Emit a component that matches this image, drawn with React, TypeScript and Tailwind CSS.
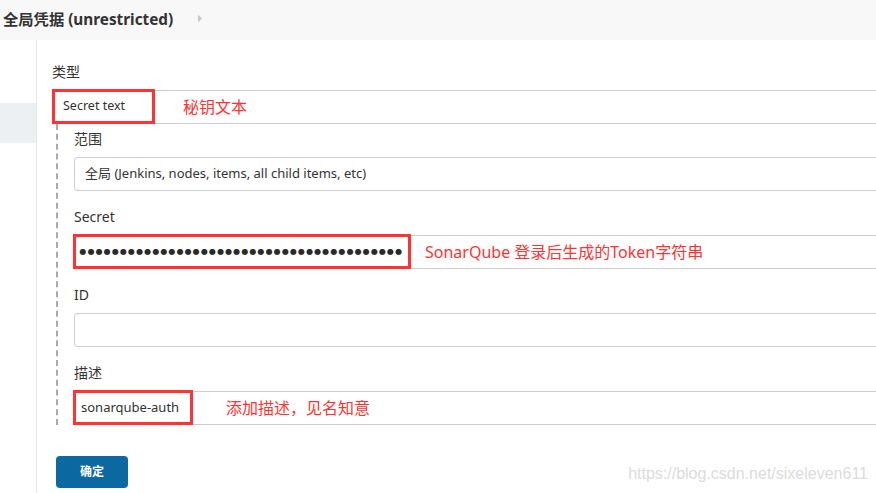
import React from "react";

const font = { fontFamily: '"Noto Sans", "Noto Sans CJK SC", sans-serif' };

export default function App() {
  const dots = Array.from({ length: 40 });

  return (
    <div className="w-[876px] h-[493px] overflow-hidden bg-white text-[#333] flex flex-col relative" style={font}>
      {/* 顶部标题 */}
      <header className="h-10 shrink-0 bg-[#f8f8f8] flex items-center pl-[3px]">
        <h1 className="text-[15.3px] font-bold text-[#333] leading-none">全局凭据 (unrestricted)</h1>
        <svg width="6" height="9" viewBox="0 0 6 9" className="ml-[24px] -mt-[3px]">
          <path d="M1 0.5 L5 4.5 L1 8.5 Z" fill="#c8c8c8" />
        </svg>
      </header>

      <div className="flex flex-1">
        {/* 侧栏 */}
        <aside className="w-[37px] shrink-0 border-r border-[#e6e6e6] pt-[63px]">
          <div className="h-10 bg-[#edf0f3]" />
        </aside>

        {/* 表单 */}
        <main className="flex-1 pl-[15px] pt-[24px] -mr-4">
          <label className="block text-[14px] leading-[16px] mb-[10px]">类型</label>
          <div className="flex items-center h-[34px] border-y border-[#ccc]">
            <div className="h-[35px] -mt-[2px] -mb-px border-[3px] border-[#f33] flex items-center w-[103px] pl-[8px] text-[12.5px]">
              Secret text
            </div>
            <span className="ml-[28px] text-[16px] text-[#f33]">秘钥文本</span>
          </div>

          <div className="ml-[4px] border-l-2 border-dashed border-[#aaa] pl-[16px] pt-[7px]">
            <label className="block text-[14px] leading-[16px] mb-[10px]">范围</label>
            <div className="flex items-center h-[34px] border border-[#ccc] rounded-l-[3px] pl-[10px] text-[13px]">
              全局 (Jenkins, nodes, items, all child items, etc)
            </div>

            <label className="block text-[14px] leading-[16px] mt-[18px] mb-[10px]">Secret</label>
            <div className="flex items-center h-[34px] border-y border-[#ccc]">
              <div className="h-[35px] -mt-[2px] -mb-px -ml-px border-[3px] border-[#f33] flex items-center w-[338px] pl-[3px]">
                <div className="flex text-[8px] text-[#2a2a2a] leading-none" style={{ fontFamily: '"DejaVu Sans", sans-serif' }}>
                  {dots.map((_, i) => (
                    <span key={i} className="w-[8.1px] text-center">●</span>
                  ))}
                </div>
              </div>
              <span className="ml-[14px] text-[16px] text-[#f33]">SonarQube 登录后生成的Token字符串</span>
            </div>

            <label className="block text-[14px] leading-[16px] mt-[18px] mb-[10px]">ID</label>
            <div className="h-[34px] border border-[#ccc] rounded-l-[3px]" />

            <label className="block text-[14px] leading-[16px] mt-[18px] mb-[10px]">描述</label>
            <div className="flex items-center h-[34px] border-y border-[#ccc]">
              <div className="h-[35px] -mt-[2px] -mb-px -ml-px border-[3px] border-[#f33] flex items-center w-[120px] pl-[5px] text-[13px]">
                sonarqube-auth
              </div>
              <span className="ml-[33px] text-[16px] text-[#f33]">添加描述，见名知意</span>
            </div>
          </div>

          <button className="ml-[4px] mt-[31px] w-[72px] h-[32px] rounded-[4px] bg-[#0b68a1] text-white text-[12px] font-bold">
            确定
          </button>
        </main>
      </div>

      <span
        className="absolute right-[8px] bottom-[7px] text-[16px] text-[#dcdcdc]"
        style={{ fontFamily: '"Liberation Sans", Arial, sans-serif' }}
      >
        https://blog.csdn.net/sixeleven611
      </span>
    </div>
  );
}
